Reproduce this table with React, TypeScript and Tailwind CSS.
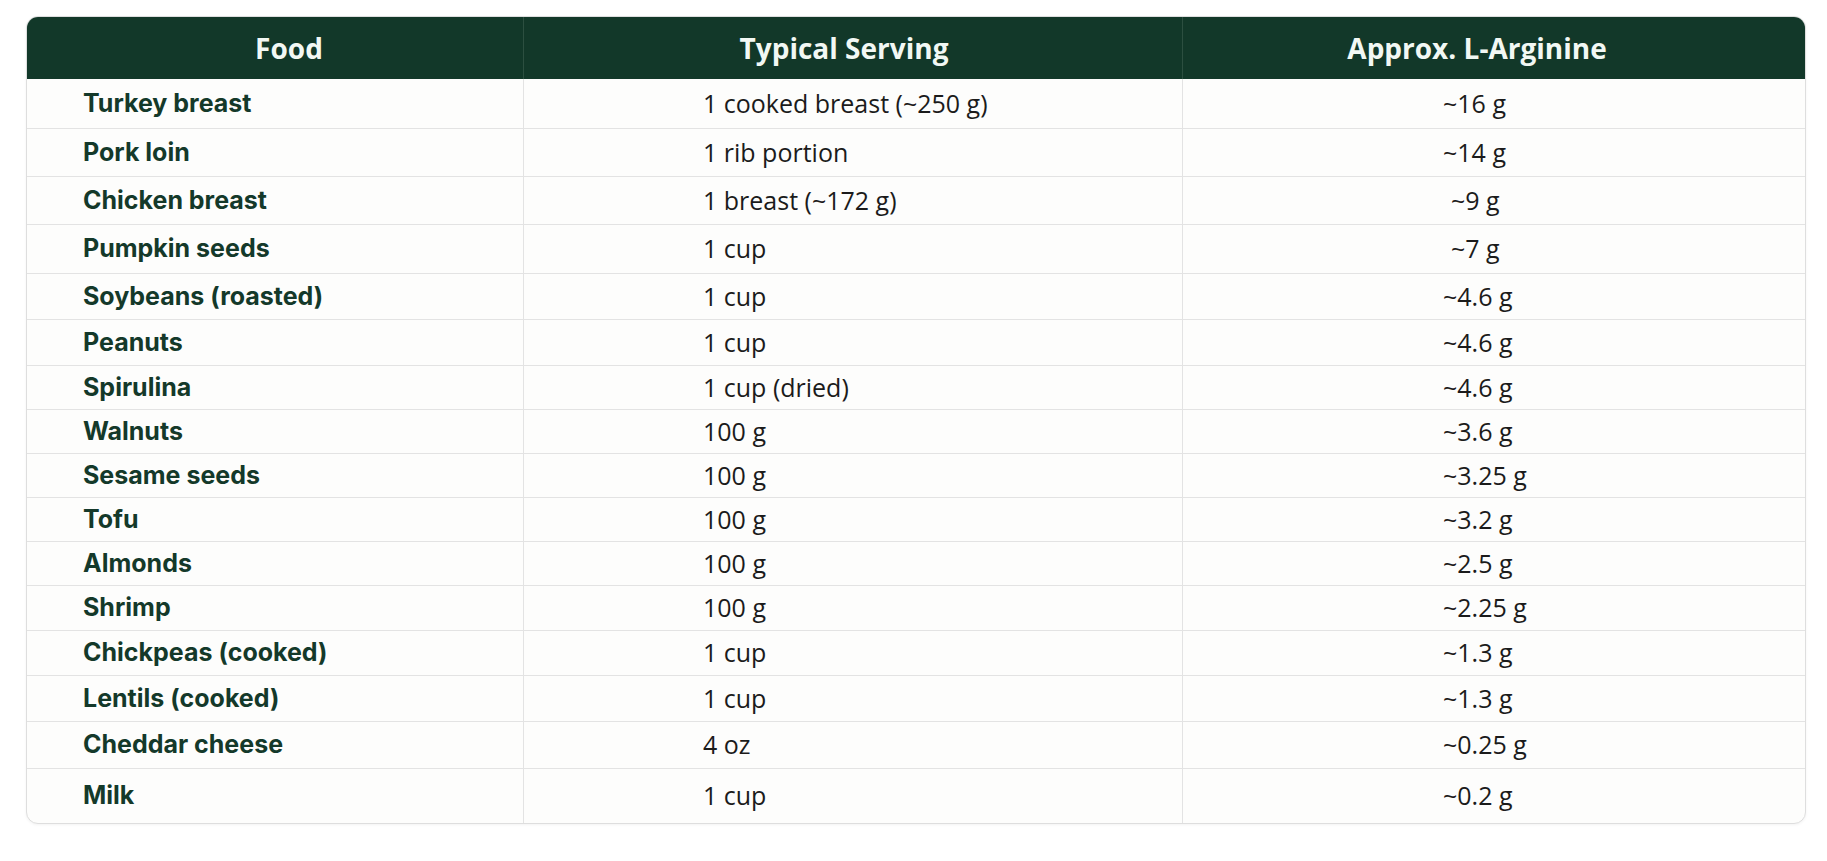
import React from "react";

const rows = [
  { food: "Turkey breast", serving: "1 cooked breast (~250 g)", amount: "~16 g", h: "h-[50px]", pad: "pl-[260px]" },
  { food: "Pork loin", serving: "1 rib portion", amount: "~14 g", h: "h-[48px]", pad: "pl-[260px]" },
  { food: "Chicken breast", serving: "1 breast (~172 g)", amount: "~9 g", h: "h-[48px]", pad: "pl-[268px]" },
  { food: "Pumpkin seeds", serving: "1 cup", amount: "~7 g", h: "h-[49px]", pad: "pl-[268px]" },
  { food: "Soybeans (roasted)", serving: "1 cup", amount: "~4.6 g", h: "h-[46px]", pad: "pl-[260px]" },
  { food: "Peanuts", serving: "1 cup", amount: "~4.6 g", h: "h-[46px]", pad: "pl-[260px]" },
  { food: "Spirulina", serving: "1 cup (dried)", amount: "~4.6 g", h: "h-[44px]", pad: "pl-[260px]" },
  { food: "Walnuts", serving: "100 g", amount: "~3.6 g", h: "h-[44px]", pad: "pl-[260px]" },
  { food: "Sesame seeds", serving: "100 g", amount: "~3.25 g", h: "h-[44px]", pad: "pl-[260px]" },
  { food: "Tofu", serving: "100 g", amount: "~3.2 g", h: "h-[44px]", pad: "pl-[260px]" },
  { food: "Almonds", serving: "100 g", amount: "~2.5 g", h: "h-[44px]", pad: "pl-[260px]" },
  { food: "Shrimp", serving: "100 g", amount: "~2.25 g", h: "h-[45px]", pad: "pl-[260px]" },
  { food: "Chickpeas (cooked)", serving: "1 cup", amount: "~1.3 g", h: "h-[45px]", pad: "pl-[260px]" },
  { food: "Lentils (cooked)", serving: "1 cup", amount: "~1.3 g", h: "h-[46px]", pad: "pl-[260px]" },
  { food: "Cheddar cheese", serving: "4 oz", amount: "~0.25 g", h: "h-[47px]", pad: "pl-[260px]" },
  { food: "Milk", serving: "1 cup", amount: "~0.2 g", h: "h-[54px]", pad: "pl-[260px]" },
];

const App = () => {
  return (
    <div className="w-[1827px] h-[861px] bg-white pt-[16px] pl-[26px]">
      <div className="w-[1780px] rounded-[12px] border border-[#dedede] bg-[#fdfdfc] overflow-hidden shadow-[0_1px_3px_rgba(0,0,0,0.05)]">
        <div className="grid grid-cols-[496px_659px_1fr] h-[62px] bg-[#123829] text-[#f2f8f4] font-['Open_Sans',sans-serif] font-bold text-[28px]">
          <div className="flex items-center justify-center pl-[28px]">Food</div>
          <div className="flex items-center justify-center pr-[18px] border-l border-[#2c4f40]">Typical Serving</div>
          <div className="flex items-center justify-center pr-[34px] border-l border-[#2c4f40]">Approx. L-Arginine</div>
        </div>
        {rows.map((row, index) => (
          <div
            key={index}
            className={`grid grid-cols-[496px_659px_1fr] ${row.h} ${index < rows.length - 1 ? "border-b border-[#e3e3e3]" : ""}`}
          >
            <div className="flex items-center pl-[56px] font-['Inter',sans-serif] font-bold text-[25px] text-[#14392a]">
              {row.food}
            </div>
            <div className="flex items-center pl-[179px] border-l border-[#e3e3e3] font-['Open_Sans',sans-serif] text-[25px] text-[#1b1b1b]">
              {row.serving}
            </div>
            <div className={`flex items-center ${row.pad} border-l border-[#e3e3e3] font-['Open_Sans',sans-serif] text-[25px] text-[#1b1b1b]`}>
              {row.amount}
            </div>
          </div>
        ))}
      </div>
    </div>
  );
};

export default App;
